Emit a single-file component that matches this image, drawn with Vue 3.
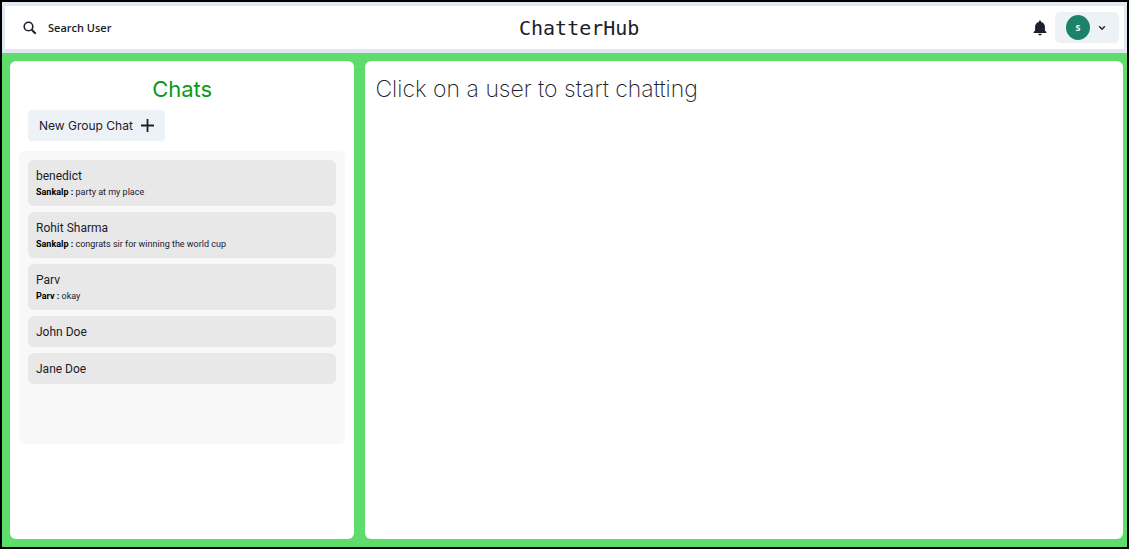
<script setup>
const chats = [
  { name: 'benedict', sender: 'Sankalp', text: 'party at my place' },
  { name: 'Rohit Sharma', sender: 'Sankalp', text: 'congrats sir for winning the world cup' },
  { name: 'Parv', sender: 'Parv', text: 'okay' },
  { name: 'John Doe' },
  { name: 'Jane Doe' },
]
</script>

<template>
  <div class="app">
    <header class="topbar">
      <button class="search" type="button">
        <svg width="14" height="14" viewBox="0 0 14 14" fill="none" stroke="currentColor" aria-hidden="true">
          <circle cx="5.5" cy="5.5" r="4.3" stroke-width="1.6" />
          <path d="M8.7 8.7L12.7 12.7" stroke-width="2" />
        </svg>
        <span>Search User</span>
      </button>
      <h1 class="brand">ChatterHub</h1>
      <div class="account">
        <button class="bell" type="button" aria-label="Notifications">
          <svg width="14" height="16" viewBox="0 0 14 16" fill="currentColor" aria-hidden="true">
            <path d="M7 0.4c.6 0 1 .4 1 1v.5c2.400.5 3.900 2.300 3.900 4.700v3.800l1.500 1.700v.9H.6v-.9l1.500-1.700V6.600C2.100 4.200 3.600 2.400 6 1.900v-.5c0-.6.4-1 1-1z" />
            <path d="M5.300 13.800h3.400c0 1-.7 1.700-1.700 1.700s-1.700-.7-1.700-1.700z" />
          </svg>
        </button>
        <button class="profile" type="button" aria-label="Account menu">
          <span class="avatar">S</span>
          <svg width="8" height="6" viewBox="0 0 8 6" fill="none" stroke="currentColor" stroke-width="1.300" aria-hidden="true">
            <path d="M1.200 1.300L4 4.200L6.800 1.300" />
          </svg>
        </button>
      </div>
    </header>

    <main class="content">
      <section class="panel chats">
        <h2 class="title">Chats</h2>
        <button class="new-group" type="button">
          <span>New Group Chat</span>
          <svg width="13" height="13" viewBox="0 0 13 13" fill="none" stroke="currentColor" stroke-width="1.800" aria-hidden="true">
            <path d="M6.500 0V13M0 6.500H13" />
          </svg>
        </button>
        <ul class="list">
          <li v-for="chat in chats" :key="chat.name">
            <button class="chat" type="button">
              <span class="name">{{ chat.name }}</span>
              <span v-if="chat.text" class="message"><b>{{ chat.sender }} :</b> {{ chat.text }}</span>
            </button>
          </li>
        </ul>
      </section>
      <section class="panel conversation">
        <p class="hint">Click on a user to start chatting</p>
      </section>
    </main>
  </div>
</template>

<style>
body {
  margin: 0;
}
</style>

<style scoped>
.app {
  box-sizing: border-box;
  min-height: 100vh;
  display: flex;
  flex-direction: column;
  border: 2px solid #000;
  background: #5fdd6c;
  color: #1a202c;
  font-family: "Open Sans", "Noto Sans", sans-serif;
}

h1,
h2,
p,
ul {
  margin: 0;
  padding: 0;
  font-weight: 400;
}

button {
  margin: 0;
  border: 0;
  padding: 0;
  background: none;
  color: inherit;
  font-family: inherit;
  cursor: pointer;
}

svg {
  display: block;
  flex: none;
}

.topbar {
  display: flex;
  align-items: center;
  justify-content: space-between;
  height: 43px;
  border: 4px solid #e2e8f3;
  border-right-width: 3px;
  border-left-width: 3px;
  background: #fff;
}

.search {
  display: flex;
  align-items: center;
  gap: 11px;
  padding: 0 14px 0 18px;
  font-size: 11px;
  font-weight: 600;
  line-height: 20px;
}

.brand {
  font-family: "DejaVu Sans Mono", monospace;
  font-size: 20px;
  line-height: 28px;
}

.account {
  display: flex;
  align-items: center;
  gap: 8px;
  padding-right: 5px;
}

.profile {
  display: flex;
  align-items: center;
  gap: 8px;
  height: 31px;
  padding: 0 13px 0 11px;
  border-radius: 5px;
  background: #edf2f7;
}

.avatar {
  width: 24px;
  height: 25px;
  border-radius: 50%;
  background: #1c826a;
  color: #fff;
  font-size: 9px;
  font-weight: 700;
  line-height: 25px;
  text-align: center;
}

.content {
  flex: 1;
  display: grid;
  grid-template-columns: 5fr 11fr;
  gap: 11px;
  padding: 8px 4px 8px 8px;
}

.panel {
  border-radius: 6px;
  background: #fff;
}

.chats {
  display: flex;
  flex-direction: column;
  align-items: flex-start;
  padding: 12px 9px;
}

.title {
  align-self: stretch;
  color: #0b9a1b;
  font-family: Inter, sans-serif;
  font-size: 22px;
  font-weight: 400;
  line-height: 32px;
  text-align: center;
}

.new-group {
  display: flex;
  align-items: center;
  gap: 8px;
  height: 31px;
  margin: 5px 9px 10px;
  padding: 0 11px;
  border-radius: 4px;
  background: #edf2f7;
  font-family: Inter, sans-serif;
  font-size: 12px;
  font-weight: 400;
}

.list {
  align-self: stretch;
  display: flex;
  flex-direction: column;
  gap: 6px;
  min-height: 275px;
  padding: 9px;
  border-radius: 6px;
  background: #f8f8f8;
  list-style: none;
}

.chat {
  display: flex;
  flex-direction: column;
  width: 100%;
  padding: 8px 8px 6px;
  border-radius: 6px;
  background: #e8e8e8;
  font-family: Roboto, "Noto Sans", sans-serif;
  text-align: left;
}

.name {
  font-size: 12px;
  line-height: 17px;
}

.message {
  font-size: 9px;
  line-height: 15px;
}

.message b {
  color: #000;
  font-weight: 700;
}

.conversation {
  padding: 12px 10px;
}

.hint {
  font-family: Inter, sans-serif;
  font-size: 23px;
  font-weight: 200;
  line-height: 32px;
}
</style>
